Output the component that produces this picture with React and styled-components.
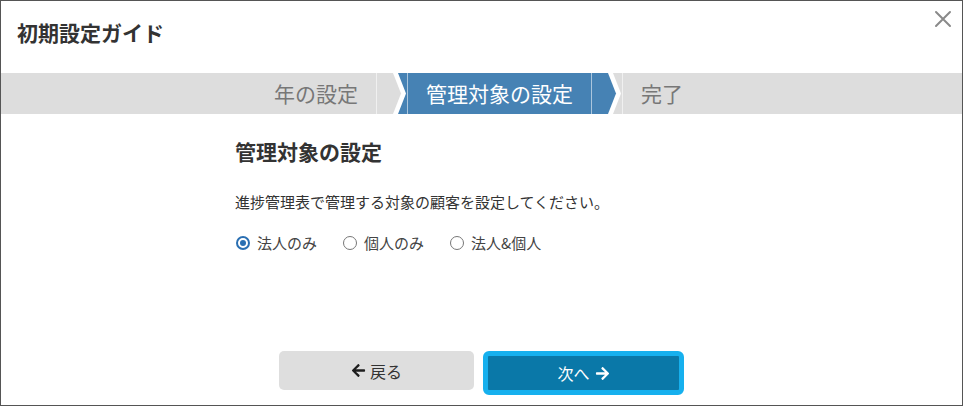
import React from 'react';
import styled, { createGlobalStyle } from 'styled-components';
import { FaArrowLeft, FaArrowRight } from 'react-icons/fa';

const GlobalStyle = createGlobalStyle`
  html, body { margin: 0; padding: 0; background: #fff; }
  body { font-family: "Noto Sans CJK JP", "Noto Sans", sans-serif; }
  * { box-sizing: border-box; }
`;

const Dialog = styled.div`
  width: 963px;
  height: 406px;
  border: 1px solid #555;
  background: #fff;
  display: flex;
  flex-direction: column;
`;

const Header = styled.header`
  height: 72px;
  flex: none;
  display: flex;
  justify-content: space-between;
  align-items: flex-start;
  padding: 0 10px 0 16px;
`;

const Title = styled.h1`
  margin: 21px 0 0;
  font-size: 21px;
  line-height: 20px;
  font-weight: 700;
  color: #333;
`;

const CloseButton = styled.button`
  margin-top: 9px;
  padding: 0;
  border: none;
  background: none;
  width: 18px;
  height: 18px;
  display: flex;
  cursor: pointer;
`;

const StepBar = styled.nav`
  height: 41px;
  flex: none;
  background: #dddddd;
  display: flex;
  align-items: stretch;
  padding-left: 255px;
`;

const Step = styled.div`
  display: flex;
  align-items: center;
  padding: 0 18px;
  font-size: 21px;
  line-height: 1;
  color: ${p => (p.$active ? '#fff' : '#777')};
  background: ${p => (p.$active ? '#4682b4' : 'transparent')};
`;

const ConnectorSvg = styled.svg`
  width: 32px;
  height: 41px;
  flex: none;
  display: block;
`;

const Content = styled.main`
  flex: 1;
  padding: 25px 0 0 234px;
`;

const Heading = styled.h2`
  margin: 0;
  font-size: 21px;
  line-height: 24px;
  font-weight: 700;
  color: #333;
`;

const Description = styled.p`
  margin: 28px 0 0;
  font-size: 15px;
  line-height: 22px;
  color: #333;
`;

const RadioRow = styled.div`
  margin-top: 19px;
  display: flex;
  gap: 25px;
  font-size: 15px;
  line-height: 22px;
  color: #444;
`;

const RadioOption = styled.label`
  display: flex;
  align-items: center;
  gap: 7px;
  margin-left: 1px;
`;

const RadioMark = styled.span`
  width: 14px;
  height: 14px;
  border-radius: 50%;
  border: ${p => (p.$checked ? '2px solid #2a6fb2' : '1px solid #777')};
  display: grid;
  place-items: center;
  background: #fff;
  &::after {
    content: '';
    width: 6px;
    height: 6px;
    border-radius: 50%;
    background: ${p => (p.$checked ? '#2a6fb2' : 'transparent')};
  }
`;

const Footer = styled.footer`
  flex: none;
  display: flex;
  justify-content: center;
  align-items: flex-start;
  gap: 9px;
  padding-bottom: 10px;
`;

const BaseButton = styled.button`
  display: flex;
  align-items: center;
  justify-content: center;
  font-family: inherit;
  font-size: 16px;
  line-height: 1;
  cursor: pointer;
`;

const BackButton = styled(BaseButton)`
  width: 195px;
  height: 39px;
  border: none;
  border-radius: 5px;
  background: #dedede;
  color: #333;
  gap: 4px;
  svg { color: #1e1e1e; }
`;

const NextButton = styled(BaseButton)`
  width: 201px;
  height: 44px;
  border: 5px solid #16b0ee;
  border-radius: 6px;
  background: #0a78a8;
  color: #fff;
  gap: 5px;
`;

function Connector({ from, to }) {
  return (
    <ConnectorSvg viewBox="0 0 32 41" preserveAspectRatio="none">
      <rect x="0" y="0" width="32" height="41" fill="#fff" />
      <polygon points="0,0 17,0 25,20.5 17,41 0,41" fill={from} />
      <polygon points="22,0 32,0 32,41 22,41 30,20.5" fill={to} />
      <line x1="0.5" y1="0" x2="0.5" y2="41" stroke="rgba(255,255,255,0.55)" strokeWidth="1" />
      <line x1="31.5" y1="0" x2="31.5" y2="41" stroke="rgba(255,255,255,0.55)" strokeWidth="1" />
    </ConnectorSvg>
  );
}

const GREY = '#dddddd';
const BLUE = '#4682b4';

export default function App() {
  return (
    <>
      <GlobalStyle />
      <Dialog>
        <Header>
          <Title>初期設定ガイド</Title>
          <CloseButton aria-label="閉じる">
            <svg width="18" height="18" viewBox="0 0 18 18">
              <path d="M2 2 L16 16 M16 2 L2 16" stroke="#8a8a8a" strokeWidth="2" strokeLinecap="round" />
            </svg>
          </CloseButton>
        </Header>
        <StepBar>
          <Step>年の設定</Step>
          <Connector from={GREY} to={BLUE} />
          <Step $active>管理対象の設定</Step>
          <Connector from={BLUE} to={GREY} />
          <Step>完了</Step>
        </StepBar>
        <Content>
          <Heading>管理対象の設定</Heading>
          <Description>進捗管理表で管理する対象の顧客を設定してください。</Description>
          <RadioRow>
            <RadioOption><RadioMark $checked />法人のみ</RadioOption>
            <RadioOption><RadioMark />個人のみ</RadioOption>
            <RadioOption><RadioMark />法人&amp;個人</RadioOption>
          </RadioRow>
        </Content>
        <Footer>
          <BackButton><FaArrowLeft size={15} />戻る</BackButton>
          <NextButton>次へ<FaArrowRight size={15} /></NextButton>
        </Footer>
      </Dialog>
    </>
  );
}
